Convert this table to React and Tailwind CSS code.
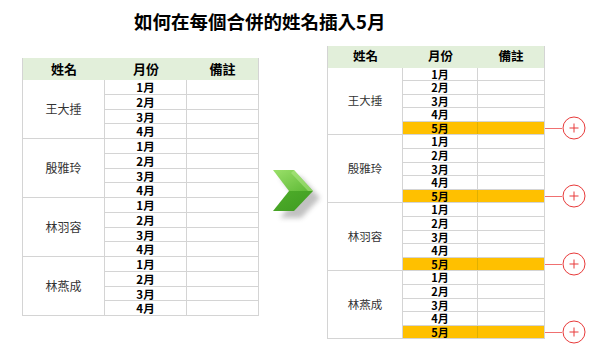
const names = ['王大捶', '殷雅玲', '林羽容', '林燕成'];

const font = { fontFamily: '"Noto Sans CJK TC", "Noto Sans", sans-serif' };

const Arrow = () => (
  <svg width="56" height="56" viewBox="0 0 56 56" className="block">
    <defs>
      <linearGradient id="up" x1="0" y1="0" x2="1" y2="1">
        <stop offset="0" stopColor="#9be06a" />
        <stop offset="1" stopColor="#5cb834" />
      </linearGradient>
      <linearGradient id="dn" x1="0" y1="0" x2="1" y2="1">
        <stop offset="0" stopColor="#4fae2a" />
        <stop offset="1" stopColor="#3f9a22" />
      </linearGradient>
      <filter id="sh" x="-30%" y="-30%" width="160%" height="160%">
        <feGaussianBlur stdDeviation="2.5" />
      </filter>
    </defs>
    <polygon points="6,6 27,6 46,27 27,47 6,47 22,27" fill="#777" opacity="0.45" filter="url(#sh)" transform="translate(3,3)" />
    <polygon points="2,2 23,2 42,23 18,23" fill="url(#up)" />
    <polygon points="18,23 42,23 23,43 2,43" fill="url(#dn)" />
    <polygon points="23,2 42,23 37,23 20,5" fill="#b6ec8c" opacity="0.5" />
  </svg>
);

const LeftTable = () => (
  <div className="w-[237px] border-l border-r border-[#d4d4d4]">
    <div className="flex h-[22px] bg-[#e2efda] text-[13px] font-bold text-black items-center">
      <div className="w-[82px] text-center">姓名</div>
      <div className="w-[82px] text-center">月份</div>
      <div className="flex-1 text-center">備註</div>
    </div>
    {names.map((n) => (
      <div key={n} className="flex">
        <div className="w-[82px] flex items-center justify-center border-r border-b border-[#d4d4d4] text-[12px] text-[#333]">
          {n}
        </div>
        <div className="flex-1">
          {[1, 2, 3, 4].map((m) => (
            <div key={m} className="flex h-[14.75px] border-b border-[#d4d4d4]">
              <div className="w-[82px] border-r border-[#d4d4d4] text-[11.5px] font-bold leading-[14px] text-center text-black">
                {m}月
              </div>
              <div className="flex-1" />
            </div>
          ))}
        </div>
      </div>
    ))}
  </div>
);

const RightTable = () => (
  <div className="w-[218px] border-l border-r border-[#d4d4d4]">
    <div className="flex h-[21.5px] bg-[#e2efda] text-[12.5px] font-bold text-black items-center">
      <div className="w-[75px] text-center">姓名</div>
      <div className="w-[75px] text-center">月份</div>
      <div className="flex-1 text-center">備註</div>
    </div>
    {names.map((n) => (
      <div key={n} className="flex">
        <div className="w-[75px] flex items-center justify-center border-r border-b border-[#d4d4d4] text-[11.5px] text-[#333]">
          {n}
        </div>
        <div className="flex-1">
          {[1, 2, 3, 4].map((m) => (
            <div key={m} className="flex h-[13.6px] border-b border-[#d4d4d4]">
              <div className="w-[75px] border-r border-[#d4d4d4] text-[11px] font-bold leading-[12.6px] text-center text-black">
                {m}月
              </div>
              <div className="flex-1" />
            </div>
          ))}
          <div className="relative flex h-[13.6px] bg-[#ffc000] border-b border-[#d4d4d4]">
            <div className="w-[75px] border-r border-[#e0b000] text-[11px] font-bold leading-[12.6px] text-center text-black">
              5月
            </div>
            <div className="flex-1" />
            <div className="absolute left-full top-1/2 -translate-y-1/2 ml-px flex items-center">
              <div className="w-[17px] h-px bg-[#f07070]" />
              <svg width="24" height="24" viewBox="0 0 24 24" className="block">
                <circle cx="12" cy="12" r="11" fill="white" stroke="#e83a3a" strokeWidth="1" />
                <path d="M12 7.5v9M7.5 12h9" stroke="#e83a3a" strokeWidth="1" />
              </svg>
            </div>
          </div>
        </div>
      </div>
    ))}
  </div>
);

export default function App() {
  return (
    <div className="w-[600px] h-[363px] bg-white overflow-hidden" style={font}>
      <div className="h-[46px] pl-[134px] pt-[8px] text-[18.5px] leading-[26px] font-bold text-black">
        如何在每個合併的姓名插入5月
      </div>
      <div className="flex items-start">
        <div className="ml-[22px] mt-[12px]">
          <LeftTable />
        </div>
        <div className="ml-[12px] mt-[122px]">
          <Arrow />
        </div>
        <div className="ml-0">
          <RightTable />
        </div>
      </div>
    </div>
  );
}
